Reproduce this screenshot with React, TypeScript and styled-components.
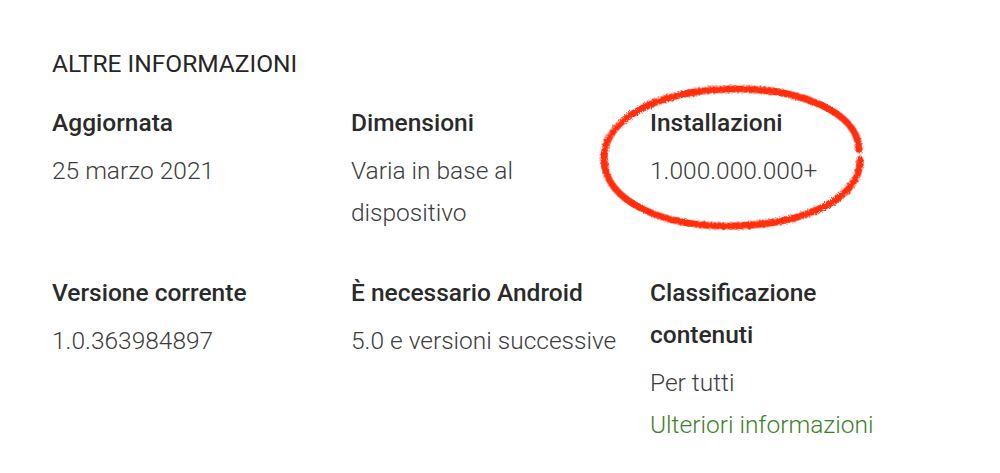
import React from "react";
import styled, { createGlobalStyle } from "styled-components";

const GlobalStyle = createGlobalStyle`
  html, body {
    margin: 0;
    background: #ffffff;
    font-family: Roboto, "Noto Sans", Arial, sans-serif;
  }
`;

interface Info {
  label: string;
  value: string[];
  link?: string;
  circled?: boolean;
}

const rows: Info[][] = [
  [
    { label: "Aggiornata", value: ["25 marzo 2021"] },
    { label: "Dimensioni", value: ["Varia in base al", "dispositivo"] },
    { label: "Installazioni", value: ["1.000.000.000+"], circled: true },
  ],
  [
    { label: "Versione corrente", value: ["1.0.363984897"] },
    { label: "È necessario Android", value: ["5.0 e versioni successive"] },
    {
      label: "Classificazione contenuti",
      value: ["Per tutti"],
      link: "Ulteriori informazioni",
    },
  ],
];

// hand drawn red marker ring
const Scribble = () => (
  <Circle width="280" height="160" viewBox="0 0 280 160">
    <defs>
      <filter id="crayon" x="-10%" y="-10%" width="120%" height="120%">
        <feTurbulence type="fractalNoise" baseFrequency="1.2" numOctaves="3" seed="5" />
        <feDisplacementMap in="SourceGraphic" scale="4" />
      </filter>
    </defs>
    <g filter="url(#crayon)" transform="rotate(-1.2 140 78)">
      <path
        d="M267 73 C267 36 210 10 140 10 C70 10 12 36 12 78 C12 120 70 147 140 147 C212 147 268 122 268 83"
        fill="none"
        stroke="#ff2d0d"
        strokeWidth="7"
        strokeLinecap="round"
      />
    </g>
  </Circle>
);

export default function App() {
  return (
    <>
      <GlobalStyle />
      <Page>
        <Heading>ALTRE INFORMAZIONI</Heading>
        {rows.map((row, i) => (
          <Row key={i}>
            {row.map((item) => (
              <Cell key={item.label}>
                {item.circled && <Scribble />}
                <Label>{item.label}</Label>
                <Value>
                  {item.value.map((v) => (
                    <div key={v}>{v}</div>
                  ))}
                  {item.link && <Link>{item.link}</Link>}
                </Value>
              </Cell>
            ))}
          </Row>
        ))}
      </Page>
    </>
  );
}

const Page = styled.div`
  padding: 48.6px 0 0 52px;
  display: flex;
  flex-direction: column;
`;

const Heading = styled.div`
  font-size: 24.5px;
  line-height: 30px;
  font-weight: 400;
  color: #262626;
  margin-bottom: 23px;
`;

const Row = styled.div`
  display: grid;
  grid-template-columns: 299px 299px 299px;
  margin-bottom: 37.6px;
`;

const Cell = styled.div`
  position: relative;
  display: flex;
  flex-direction: column;
  gap: 6.4px;
`;

const Label = styled.div`
  font-size: 24.5px;
  line-height: 42px;
  font-weight: 500;
  color: #2a2a2a;
  width: 240px;
`;

const Value = styled.div`
  font-size: 24.5px;
  line-height: 42px;
  font-weight: 300;
  color: #3c3c3c;
`;

const Link = styled.div`
  color: #3f7f2c;
`;

const Circle = styled.svg`
  position: absolute;
  left: -58px;
  top: -23px;
  pointer-events: none;
`;
